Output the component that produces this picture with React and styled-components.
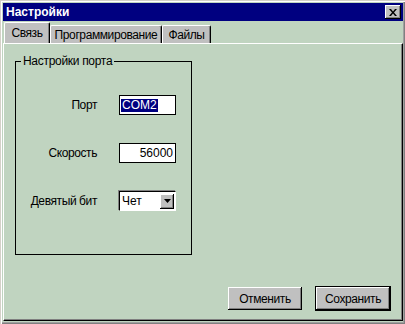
import React from "react";
import styled, { createGlobalStyle } from "styled-components";

const GREEN = "#c0d4c0";
const GRAY = "#c0c0c0";

const GlobalStyle = createGlobalStyle`
  html, body {
    margin: 0;
    padding: 0;
    background: ${GREEN};
  }
  body {
    font-family: "Liberation Sans", Arial, sans-serif;
    font-size: 11px;
    color: #000;
  }
`;

const Window = styled.div`
  width: 405px;
  height: 324px;
  box-sizing: border-box;
  padding: 3px 2px 3px 3px;
  display: flex;
  flex-direction: column;
  background: ${GREEN};
  box-shadow: inset 1px 1px #d4d0c8, inset 2px 2px #fff,
    inset -1px -1px #808080, inset -2px -2px #a0a0a0;
`;

const TitleBar = styled.div`
  height: 18px;
  flex: none;
  display: flex;
  align-items: center;
  justify-content: space-between;
  padding: 0 2px 0 3px;
  background: #000080;
  color: #fff;
  font-weight: bold;
  font-size: 12px;
`;

const CloseButton = styled.div`
  width: 16px;
  height: 14px;
  box-sizing: border-box;
  display: flex;
  align-items: center;
  justify-content: center;
  background: ${GRAY};
  box-shadow: inset -1px -1px #000, inset 1px 1px #fff, inset -2px -2px #808080;
`;

const Tabs = styled.div`
  height: 22px;
  flex: none;
  display: flex;
  align-items: flex-end;
  padding-left: 1px;
`;

const Tab = styled.div`
  width: ${(p) => p.$w}px;
  height: ${(p) => (p.$active ? 21 : 18)}px;
  box-sizing: border-box;
  display: flex;
  align-items: center;
  justify-content: center;
  font-size: 12px;
  letter-spacing: -0.4px;
  background: ${GRAY};
  border-top: 1px solid #fff;
  border-left: 1px solid #fff;
  border-right: 1px solid #000;
  border-radius: 2px 2px 0 0;
  box-shadow: inset -1px 0 #808080;
  padding-top: ${(p) => (p.$active ? 0 : 1)}px;
`;

const Panel = styled.div`
  flex: 1;
  display: flex;
  flex-direction: column;
  box-sizing: border-box;
  border-top: 1px solid #fff;
  border-left: 1px solid #fff;
  border-right: 1px solid #000;
  border-bottom: 1px solid #000;
  box-shadow: inset -1px -1px #808080;
  padding: 17px 11px 9px 11px;
`;

const Group = styled.div`
  position: relative;
  width: 177px;
  height: 194px;
  box-sizing: border-box;
  border: 1px solid #000;
  padding-top: 33px;
  display: grid;
  grid-template-columns: 81px 57px;
  grid-auto-rows: 20px;
  column-gap: 22px;
  row-gap: 28px;
  align-content: start;
`;

const GroupTitle = styled.span`
  position: absolute;
  top: -8px;
  left: 5px;
  padding: 0 2px;
  line-height: 14px;
  font-size: 12px;
  letter-spacing: -0.3px;
  background: ${GREEN};
`;

const Label = styled.div`
  display: flex;
  align-items: center;
  justify-content: flex-end;
  font-size: 12px;
  letter-spacing: -0.4px;
`;

const Field = styled.div`
  box-sizing: border-box;
  height: 20px;
  display: flex;
  align-items: center;
  justify-content: ${(p) => (p.$right ? "flex-end" : "flex-start")};
  padding: 0 2px 0 1px;
  font-size: 12px;
  background: #fff;
  border: 1px solid #000;
`;

const Selected = styled.span`
  background: #000080;
  color: #fff;
  line-height: 13px;
  padding: 0 1px;
`;

const Select = styled.div`
  box-sizing: border-box;
  height: 20px;
  display: flex;
  align-items: center;
  justify-content: space-between;
  padding: 0 1px 0 2px;
  font-size: 12px;
  background: #fff;
  border-top: 1px solid #000;
  border-left: 1px solid #000;
  border-right: 1px solid #fff;
  border-bottom: 1px solid #fff;
  box-shadow: -1px -1px #808080;
`;

const DropButton = styled.div`
  width: 14px;
  height: 15px;
  box-sizing: border-box;
  display: flex;
  align-items: center;
  justify-content: center;
  background: ${GRAY};
  box-shadow: inset -1px -1px #000, inset 1px 1px #fff, inset -2px -2px #808080;
`;

const Buttons = styled.div`
  margin-top: auto;
  display: flex;
  justify-content: flex-end;
  align-items: center;
  gap: 13px;
`;

const Button = styled.div`
  width: ${(p) => (p.$default ? 76 : 74)}px;
  height: ${(p) => (p.$default ? 25 : 23)}px;
  box-sizing: border-box;
  display: flex;
  align-items: center;
  justify-content: center;
  font-size: 12px;
  letter-spacing: -0.4px;
  background: ${GRAY};
  border: ${(p) => (p.$default ? "1px solid #000" : "none")};
  box-shadow: inset -1px -1px #000, inset 1px 1px #fff, inset -2px -2px #808080;
`;

export default function App() {
  return (
    <>
      <GlobalStyle />
      <Window>
        <TitleBar>
          <span>Настройки</span>
          <CloseButton>
            <svg width="8" height="7" viewBox="0 0 8 7">
              <path d="M0 0h2l2 2.5L6 0h2L5 3.5 8 7H6L4 4.5 2 7H0l3-3.5z" fill="#000" />
            </svg>
          </CloseButton>
        </TitleBar>
        <Tabs>
          <Tab $w={46} $active>Связь</Tab>
          <Tab $w={112}>Программирование</Tab>
          <Tab $w={49}>Файлы</Tab>
        </Tabs>
        <Panel>
          <Group>
            <GroupTitle>Настройки порта</GroupTitle>
            <Label>Порт</Label>
            <Field>
              <Selected>COM2</Selected>
            </Field>
            <Label>Скорость</Label>
            <Field $right>56000</Field>
            <Label>Девятый бит</Label>
            <Select>
              <span>Чет</span>
              <DropButton>
                <svg width="7" height="4" viewBox="0 0 7 4">
                  <path d="M0 0h7L3.5 4z" fill="#000" />
                </svg>
              </DropButton>
            </Select>
          </Group>
          <Buttons>
            <Button>Отменить</Button>
            <Button $default>Сохранить</Button>
          </Buttons>
        </Panel>
      </Window>
    </>
  );
}
